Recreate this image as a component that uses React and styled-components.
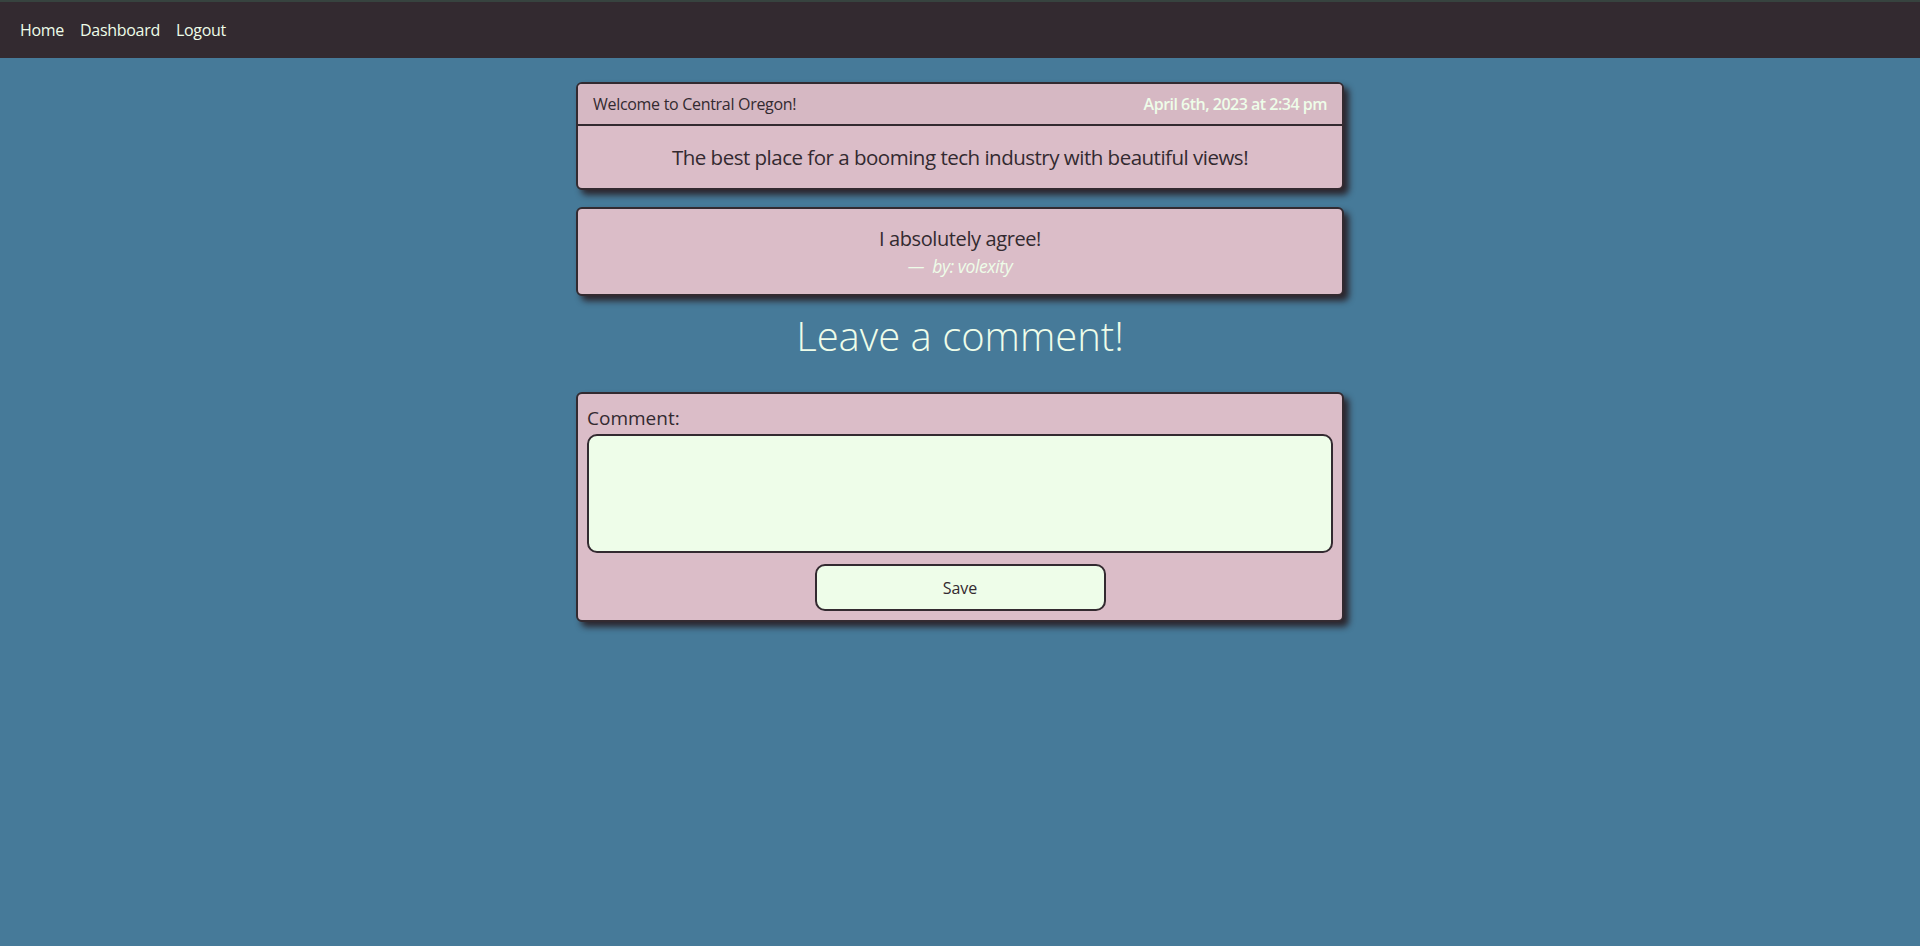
import React from 'react';
import styled, { createGlobalStyle } from 'styled-components';

const dark = '#332a30';
const pink = '#dbbdc8';
const mint = '#eefde9';

const GlobalStyle = createGlobalStyle`
  html, body {
    margin: 0;
    padding: 0;
  }
  body {
    background: #467a99;
    font-family: "Open Sans", "Noto Sans", sans-serif;
    min-height: 100vh;
  }
  * {
    box-sizing: border-box;
  }
`;

const NavBar = styled.nav`
  height: 58px;
  border-top: 2px solid #37433f;
  background: ${dark};
  display: flex;
  align-items: center;
  gap: 16px;
  padding: 0 20px;
`;

const NavLink = styled.a`
  color: ${mint};
  font-size: 16px;
  letter-spacing: -0.3px;
  text-decoration: none;
  cursor: pointer;
`;

const Main = styled.main`
  width: 40%;
  margin: 24px auto 0;
  display: flex;
  flex-direction: column;
`;

const Card = styled.section`
  background: ${pink};
  border: 2px solid ${dark};
  border-radius: 6px;
  box-shadow: 5px 5px 6px rgba(42, 34, 40, 0.95);
  color: ${dark};
  overflow: hidden;
  margin-bottom: ${p => p.$gap || 0}px;
`;

const CardHeader = styled.header`
  display: flex;
  justify-content: space-between;
  align-items: center;
  padding: 9px 15px;
  background: #d6b8c3;
  border-bottom: 2px solid ${dark};
  font-size: 16px;
  letter-spacing: -0.3px;
`;

const PostDate = styled.span`
  color: ${mint};
  font-weight: 600;
  letter-spacing: -0.5px;
`;

const CardBody = styled.div`
  padding: 16px 15px;
  text-align: center;
  font-size: 20.5px;
  line-height: 30px;
  letter-spacing: -0.5px;
`;

const CommentBody = styled.div`
  padding: 16px 15px;
  text-align: center;
  display: flex;
  flex-direction: column;
  gap: 3px;
`;

const CommentText = styled.p`
  margin: 0;
  font-size: 20px;
  letter-spacing: -0.4px;
`;

const Byline = styled.p`
  margin: 0;
  font-size: 17.5px;
  line-height: 23px;
  font-style: italic;
  letter-spacing: -0.4px;
  color: ${mint};
`;

const Title = styled.h2`
  margin: 12px 0 29px;
  text-align: center;
  font-size: 40px;
  font-weight: 300;
  color: ${mint};
`;

const Form = styled.form`
  display: flex;
  flex-direction: column;
  padding: 11px 9px 9px;
`;

const Label = styled.label`
  font-size: 19px;
  line-height: 26px;
  color: ${dark};
`;

const TextArea = styled.textarea`
  margin-top: 3px;
  height: 119px;
  width: 100%;
  resize: none;
  background: ${mint};
  border: 2px solid ${dark};
  border-radius: 10px;
  font-family: inherit;
  font-size: 16px;
  outline: none;
`;

const SaveButton = styled.button`
  align-self: center;
  margin-top: 11px;
  width: 291px;
  height: 47px;
  background: ${mint};
  border: 2px solid ${dark};
  border-radius: 10px;
  font-family: inherit;
  font-size: 16px;
  color: ${dark};
  cursor: pointer;
`;

export default function App() {
  return (
    <>
      <GlobalStyle />
      <NavBar>
        <NavLink>Home</NavLink>
        <NavLink>Dashboard</NavLink>
        <NavLink>Logout</NavLink>
      </NavBar>
      <Main>
        <Card $gap={17}>
          <CardHeader>
            <span>Welcome to Central Oregon!</span>
            <PostDate>April 6th, 2023 at 2:34 pm</PostDate>
          </CardHeader>
          <CardBody>The best place for a booming tech industry with beautiful views!</CardBody>
        </Card>
        <Card>
          <CommentBody>
            <CommentText>I absolutely agree!</CommentText>
            <Byline>—&nbsp; by: volexity</Byline>
          </CommentBody>
        </Card>
        <Title>Leave a comment!</Title>
        <Card>
          <Form onSubmit={e => e.preventDefault()}>
            <Label htmlFor="comment">Comment:</Label>
            <TextArea id="comment" />
            <SaveButton type="submit">Save</SaveButton>
          </Form>
        </Card>
      </Main>
    </>
  );
}
